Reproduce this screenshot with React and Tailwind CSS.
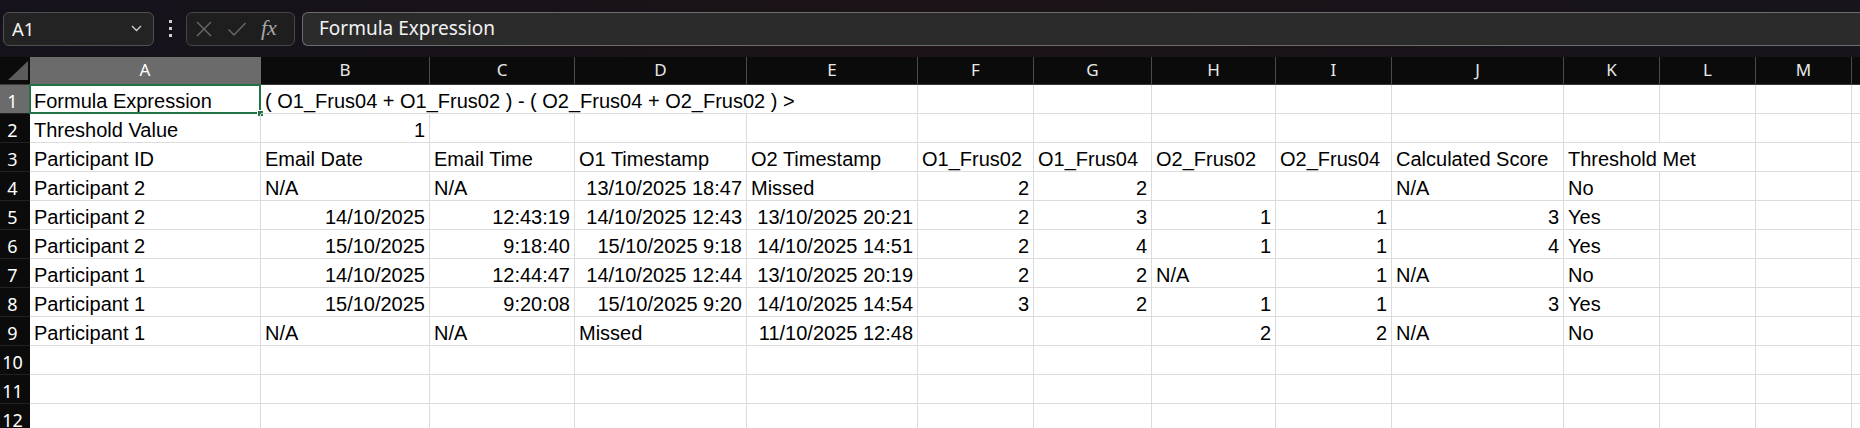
import React from "react";

const COLS = ["A", "B", "C", "D", "E", "F", "G", "H", "I", "J", "K", "L", "M", ""];

const L = (t, span = 1) => ({ t, span });
const R = (t) => ({ t, right: true, span: 1 });
const E = { t: "", span: 1 };

const rawRows = [
  [L("Formula Expression"), L("( O1_Frus04 + O1_Frus02 ) - ( O2_Frus04 + O2_Frus02 ) >", 4)],
  [L("Threshold Value"), R("1")],
  [
    L("Participant ID"), L("Email Date"), L("Email Time"), L("O1 Timestamp"), L("O2 Timestamp"),
    L("O1_Frus02"), L("O1_Frus04"), L("O2_Frus02"), L("O2_Frus04"), L("Calculated Score"), L("Threshold Met", 2),
  ],
  [L("Participant 2"), L("N/A"), L("N/A"), R("13/10/2025 18:47"), L("Missed"), R("2"), R("2"), E, E, L("N/A"), L("No")],
  [L("Participant 2"), R("14/10/2025"), R("12:43:19"), R("14/10/2025 12:43"), R("13/10/2025 20:21"), R("2"), R("3"), R("1"), R("1"), R("3"), L("Yes")],
  [L("Participant 2"), R("15/10/2025"), R("9:18:40"), R("15/10/2025 9:18"), R("14/10/2025 14:51"), R("2"), R("4"), R("1"), R("1"), R("4"), L("Yes")],
  [L("Participant 1"), R("14/10/2025"), R("12:44:47"), R("14/10/2025 12:44"), R("13/10/2025 20:19"), R("2"), R("2"), L("N/A"), R("1"), L("N/A"), L("No")],
  [L("Participant 1"), R("15/10/2025"), R("9:20:08"), R("15/10/2025 9:20"), R("14/10/2025 14:54"), R("3"), R("2"), R("1"), R("1"), R("3"), L("Yes")],
  [L("Participant 1"), L("N/A"), L("N/A"), L("Missed"), R("11/10/2025 12:48"), E, E, R("2"), R("2"), L("N/A"), L("No")],
  [],
  [],
  [],
];

// pad each row out to 14 columns (A..N)
const rows = rawRows.map((r) => {
  const out = [...r];
  let used = out.reduce((n, c) => n + c.span, 0);
  while (used < 14) {
    out.push(E);
    used++;
  }
  return out;
});

const spanClass = { 1: "", 2: "col-span-2", 4: "col-span-4" };

function Toolbar() {
  return (
    <div className="h-[57px] flex items-center bg-gradient-to-r from-[#15121b] via-[#1b1317] to-[#17141c] font-['Noto_Sans',sans-serif]">
      <div className="ml-[3px] w-[151px] h-[34px] rounded-[6px] border border-[#505050] bg-[#232323] flex items-center justify-between pl-[8px] pr-[11px]">
        <span className="text-[18.5px] text-[#f2f2f2]">A1</span>
        <svg width="11" height="7" viewBox="0 0 11 7" fill="none">
          <path d="M1 1l4.5 4.5L10 1" stroke="#d0d0d0" strokeWidth="1.3" />
        </svg>
      </div>
      <div className="w-[32px] flex flex-col items-center gap-[4px]">
        <span className="w-[3px] h-[3px] bg-[#cfcfcf]" />
        <span className="w-[3px] h-[3px] bg-[#cfcfcf]" />
        <span className="w-[3px] h-[3px] bg-[#cfcfcf]" />
      </div>
      <div className="w-[109px] h-[34px] rounded-[6px] border border-[#464646] bg-[#1e1e1e] flex items-center pl-[8px] gap-[14px]">
        <svg width="18" height="18" viewBox="0 0 18 18" fill="none">
          <path d="M2 2l14 14M16 2L2 16" stroke="#6a6a6a" strokeWidth="1.4" />
        </svg>
        <svg width="20" height="16" viewBox="0 0 20 16" fill="none">
          <path d="M1.5 8.5l5.5 5.5L18.5 2" stroke="#6a6a6a" strokeWidth="1.4" />
        </svg>
        <span className="font-['Liberation_Serif',serif] italic text-[22px] leading-none text-[#a8a8a8] -mt-[2px]">fx</span>
      </div>
      <div className="ml-[7px] flex-1 h-[34px] rounded-l-[6px] border-y border-l border-[#6c6c6c] bg-[#2b2b2b] flex items-center pl-[16px]">
        <span className="text-[19px] text-[#f2f2f2]">Formula Expression</span>
      </div>
    </div>
  );
}

function Corner() {
  return (
    <div className="h-[28px] bg-[#0b0b0b] border-b border-[#3a3a3a] flex items-end justify-end pr-[2px] pb-[4px]">
      <svg width="20" height="19" viewBox="0 0 20 19">
        <path d="M20 0V19H0z" fill="#5c5c5c" />
      </svg>
    </div>
  );
}

export default function App() {
  return (
    <div className="w-[1860px] h-[428px] overflow-hidden bg-white">
      <Toolbar />
      <div className="grid grid-cols-[30px_231px_169px_145px_172px_171px_116px_118px_124px_116px_172px_96px_96px_96px_1fr] font-['Liberation_Sans',sans-serif]">
        <Corner />
        {COLS.map((c, i) => (
          <div
            key={"h" + i}
            className={`h-[28px] border-b border-[#3a3a3a] flex items-start justify-center pt-[2px] text-[17px] leading-[22px] font-['Noto_Sans',sans-serif] ${
              i === 0 ? "bg-[#6b6b6b] text-white border-r border-r-[#6b6b6b]" : "bg-[#0b0b0b] text-[#e8e8e8] border-r border-r-[#4a4a4a]"
            }`}
          >
            {c}
          </div>
        ))}

        {rows.map((row, ri) => (
          <React.Fragment key={ri}>
            <div
              className={`h-[29px] border-b border-[#222] flex items-end justify-center pr-[5px] text-[18px] leading-[23px] font-['Noto_Sans',sans-serif] text-white ${
                ri === 0 ? "bg-[#6b6b6b]" : "bg-[#0b0b0b]"
              }`}
            >
              {ri + 1}
            </div>
            {row.map((cell, ci) => (
              <div
                key={ci}
                className={`relative h-[29px] border-b border-r border-[#dcdcdc] flex items-end whitespace-nowrap text-[20px] leading-[23px] text-black px-[4px] ${
                  spanClass[cell.span]
                } ${cell.right ? "justify-end" : "justify-start"}`}
              >
                {cell.t}
                {ri === 0 && ci === 0 && (
                  <>
                    <div className="absolute -left-[1px] -top-[1px] right-[-1px] bottom-[-1px] border-2 border-[#217346]" />
                    <div className="absolute right-[-4px] bottom-[-4px] w-[7px] h-[7px] bg-[#217346] border border-white" />
                  </>
                )}
              </div>
            ))}
          </React.Fragment>
        ))}
      </div>
    </div>
  );
}
